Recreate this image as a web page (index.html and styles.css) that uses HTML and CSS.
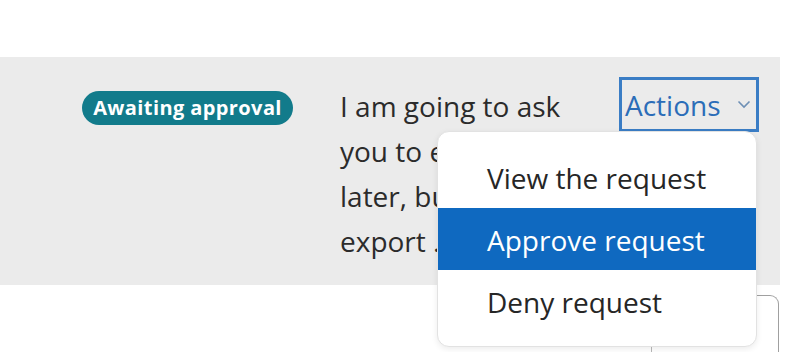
FILE: index.html
```html
<!DOCTYPE html>
<html lang="en">
<head>
    <meta charset="UTF-8">
    <title>Requests</title>
    <link rel="stylesheet" href="styles.css">
</head>
<body>
<section class="request-row">
    <div class="status-cell">
        <span class="badge">Awaiting approval</span>
    </div>
    <div class="note-cell">
        I am going to ask<br>
        you to email it<br>
        later, but please<br>
        export ...
    </div>
    <div class="actions-cell">
        <button class="actions-btn">Actions
            <svg class="chevron" width="14" height="9" viewBox="0 0 14 9">
                <path d="M1.5 1.5 L7 7 L12.5 1.5" fill="none" stroke="#6d8fb5" stroke-width="1.6"/>
            </svg>
        </button>
        <ul class="menu">
            <li>View the request</li>
            <li class="active">Approve request</li>
            <li>Deny request</li>
        </ul>
    </div>
</section>
<div class="next-row">
    <div class="next-card"></div>
</div>
</body>
</html>
```
FILE: styles.css
```css
body {
    margin: 0;
    background-color: #ffffff;
    font-family: "Open Sans", "Noto Sans", sans-serif;
    color: #2b2b2b;
    overflow: hidden;
}

.request-row {
    margin-top: 57px;
    width: 780px;
    height: 228px;
    box-sizing: border-box;
    background-color: #ebebeb;
    display: flex;
    padding-top: 20px;
}

.status-cell {
    width: 340px;
    box-sizing: border-box;
    padding-left: 82px;
    padding-top: 14px;
}

.badge {
    display: inline-block;
    width: 211px;
    height: 34px;
    line-height: 33px;
    border-radius: 17px;
    background-color: #127b8b;
    color: #ffffff;
    font-weight: bold;
    font-size: 20px;
    letter-spacing: 0.4px;
    text-align: center;
}

.note-cell {
    width: 279px;
    font-size: 28px;
    line-height: 45px;
    padding-top: 7px;
}

.actions-cell {
    position: relative;
}

.actions-btn {
    display: flex;
    align-items: center;
    width: 140px;
    height: 55px;
    box-sizing: border-box;
    padding: 0 0 0 3px;
    border: 3px solid #3a7dc5;
    background: transparent;
    color: #2b6db8;
    font-family: inherit;
    font-size: 28px;
}

.chevron {
    margin-left: 16px;
}

.menu {
    position: absolute;
    top: 54px;
    left: -182px;
    width: 318px;
    margin: 0;
    padding: 14px 0;
    list-style: none;
    background-color: #ffffff;
    border: 1px solid #e2e2e2;
    border-radius: 12px;
    box-shadow: 0 2px 6px rgba(0, 0, 0, 0.08);
    z-index: 2;
}

.menu li {
    height: 62px;
    line-height: 64px;
    padding-left: 49px;
    font-size: 28px;
    color: #262626;
}

.menu li.active {
    background-color: #0f69c0;
    color: #ffffff;
}

.next-row {
    padding: 10px 0 0 651px;
}

.next-card {
    width: 128px;
    height: 57px;
    box-sizing: border-box;
    border: 1px solid #a0a0a0;
    border-bottom: 0;
    border-left-color: #b8b8b8;
    border-radius: 0 9px 0 0;
}
```
